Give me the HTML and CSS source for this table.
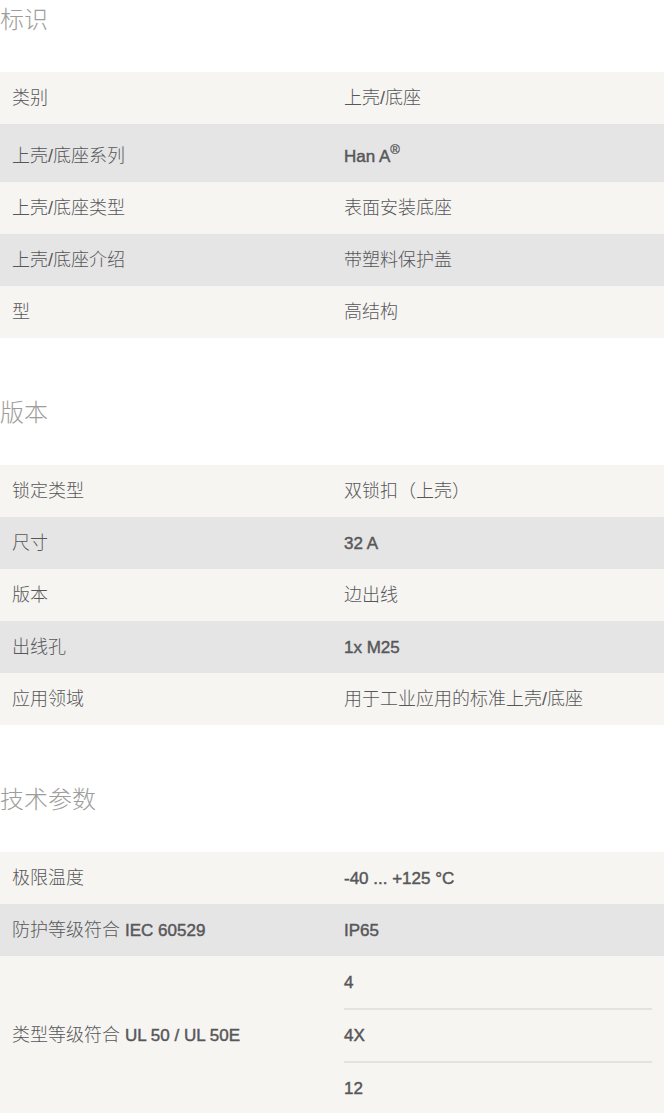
FILE: index.html
```html
<!DOCTYPE html>
<html lang="zh-CN">
<head>
<meta charset="utf-8">
<title>上壳/底座</title>
<link rel="stylesheet" href="styles.css">
</head>
<body>
<section class="group">
  <h2 class="group-title">标识</h2>
  <table class="spec">
    <tr><td class="label">类别</td><td class="value">上壳/底座</td></tr>
    <tr class="tall"><td class="label">上壳/底座系列</td><td class="value"><span class="lat">Han A<sup>®</sup></span></td></tr>
    <tr><td class="label">上壳/底座类型</td><td class="value">表面安装底座</td></tr>
    <tr><td class="label">上壳/底座介绍</td><td class="value">带塑料保护盖</td></tr>
    <tr><td class="label">型</td><td class="value">高结构</td></tr>
  </table>
</section>
<section class="group">
  <h2 class="group-title">版本</h2>
  <table class="spec">
    <tr><td class="label">锁定类型</td><td class="value">双锁扣（上壳）</td></tr>
    <tr><td class="label">尺寸</td><td class="value"><span class="lat">32 A</span></td></tr>
    <tr><td class="label">版本</td><td class="value">边出线</td></tr>
    <tr><td class="label">出线孔</td><td class="value"><span class="lat">1x M25</span></td></tr>
    <tr><td class="label">应用领域</td><td class="value">用于工业应用的标准上壳/底座</td></tr>
  </table>
</section>
<section class="group">
  <h2 class="group-title">技术参数</h2>
  <table class="spec">
    <tr><td class="label">极限温度</td><td class="value"><span class="lat">-40 ... +125 °C</span></td></tr>
    <tr><td class="label">防护等级符合 <span class="lat">IEC 60529</span></td><td class="value"><span class="lat">IP65</span></td></tr>
    <tr>
      <td class="label">类型等级符合 <span class="lat">UL 50 / UL 50E</span></td>
      <td class="value multi">
        <div class="item"><span class="lat">4</span></div>
        <div class="item"><span class="lat">4X</span></div>
        <div class="item"><span class="lat">12</span></div>
      </td>
    </tr>
  </table>
</section>
</body>
</html>
```
FILE: styles.css
```css
html, body {
  margin: 0;
  padding: 0;
  background: #ffffff;
}
body {
  font-family: "Liberation Sans", "Noto Sans CJK SC", sans-serif;
  font-weight: 300;
  color: #57575a;
}
.group + .group {
  margin-top: 55px;
}
.group-title {
  margin: 0 0 32px;
  font-size: 24px;
  line-height: 40px;
  font-weight: 300;
  color: #9d9d9a;
}
.spec {
  width: 100%;
  border-collapse: collapse;
  table-layout: fixed;
}
.spec td {
  width: 50%;
  height: 52px;
  box-sizing: border-box;
  padding: 14px 12px;
  line-height: 24px;
  font-size: 18px;
  vertical-align: middle;
}
.spec tr:nth-child(odd) {
  background: #f6f5f1;
}
.spec tr:nth-child(even) {
  background: #e5e5e5;
}
.spec tr.tall td {
  height: 58px;
  padding-top: 20px;
}
.lat {
  font-size: 17px;
  line-height: 20px;
  font-weight: 400;
  -webkit-text-stroke: 0.45px currentColor;
}
.lat sup {
  font-size: 13px;
  line-height: 0;
  vertical-align: 8px;
  -webkit-text-stroke: 0.3px currentColor;
}
.spec td.multi {
  padding-top: 0;
  padding-bottom: 0;
}
.item {
  height: 52px;
  box-sizing: border-box;
  padding: 14px 0;
  line-height: 24px;
}
.item + .item {
  height: 53px;
  border-top: 2px solid #e2e2df;
  padding-top: 13px;
}
```
